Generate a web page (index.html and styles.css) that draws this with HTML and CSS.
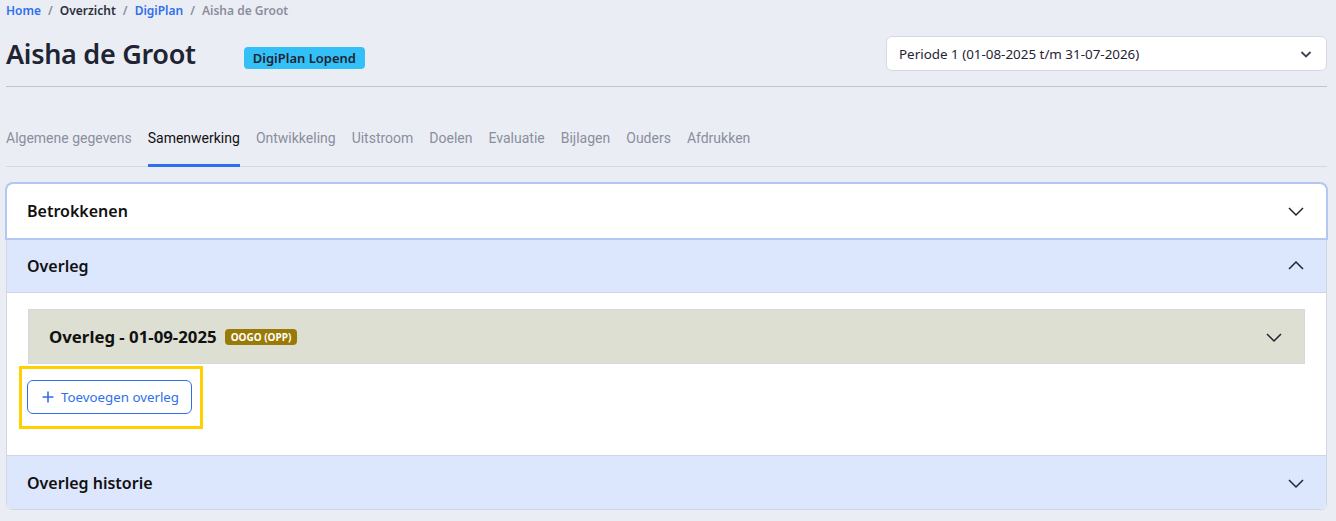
FILE: index.html
```html
<!DOCTYPE html>
<html lang="nl">
  <head>
    <meta charset="UTF-8" />
    <title>DigiPlan - Aisha de Groot</title>
    <link rel="stylesheet" href="styles.css">
  </head>
  <body>
    <nav class="breadcrumb">
      <a href="#" class="crumb-link">Home</a>
      <span class="sep">/</span>
      <span class="crumb-dark">Overzicht</span>
      <span class="sep">/</span>
      <a href="#" class="crumb-link">DigiPlan</a>
      <span class="sep">/</span>
      <span class="crumb-current">Aisha de Groot</span>
    </nav>

    <header class="page-header">
      <div class="title-group">
        <h1>Aisha de Groot</h1>
        <span class="status-badge">DigiPlan Lopend</span>
      </div>
      <div class="period-select">
        <span>Periode 1 (01-08-2025 t/m 31-07-2026)</span>
        <svg width="16" height="16" viewBox="0 0 16 16">
          <path d="M3.5 6l4.5 4.5 4.5-4.5" fill="none" stroke="#3d4352" stroke-width="1.8" />
        </svg>
      </div>
    </header>

    <ul class="tabs">
      <li>Algemene gegevens</li>
      <li class="active">Samenwerking</li>
      <li>Ontwikkeling</li>
      <li>Uitstroom</li>
      <li>Doelen</li>
      <li>Evaluatie</li>
      <li>Bijlagen</li>
      <li>Ouders</li>
      <li>Afdrukken</li>
    </ul>

    <div class="accordion">
      <div class="acc-item">
        <div class="acc-header focused">
          <span>Betrokkenen</span>
          <svg width="20" height="20" viewBox="0 0 20 20">
            <path d="M3 7l7 7 7-7" fill="none" stroke="#1f2433" stroke-width="1.5" />
          </svg>
        </div>
      </div>

      <div class="acc-item">
        <div class="acc-header open">
          <span>Overleg</span>
          <svg width="20" height="20" viewBox="0 0 20 20">
            <path d="M3 13l7-7 7 7" fill="none" stroke="#1f2433" stroke-width="1.5" />
          </svg>
        </div>
        <div class="acc-body">
          <div class="meeting">
            <div class="meeting-header">
              <span class="meeting-title">Overleg - 01-09-2025</span>
              <span class="type-badge">OOGO (OPP)</span>
              <svg class="chevron" width="20" height="20" viewBox="0 0 20 20">
                <path d="M3 7l7 7 7-7" fill="none" stroke="#1f2433" stroke-width="1.5" />
              </svg>
            </div>
          </div>
          <div class="highlight">
            <button type="button" class="add-btn">
              <svg width="14" height="14" viewBox="0 0 14 14">
                <path d="M7 1.5v11M1.5 7h11" fill="none" stroke="#2f6fed" stroke-width="1.6" />
              </svg>
              Toevoegen overleg
            </button>
          </div>
        </div>
      </div>

      <div class="acc-item">
        <div class="acc-header closed">
          <span>Overleg historie</span>
          <svg width="20" height="20" viewBox="0 0 20 20">
            <path d="M3 7l7 7 7-7" fill="none" stroke="#1f2433" stroke-width="1.5" />
          </svg>
        </div>
      </div>
    </div>
  </body>
</html>
```

FILE: styles.css
```css
* {
  margin: 0;
  padding: 0;
  box-sizing: border-box;
}

body {
  font-family: "Noto Sans", Arial, sans-serif;
  background-color: #ebedf5;
  color: #1f2433;
  padding: 0 9px 0 6px;
}

.breadcrumb {
  display: flex;
  gap: 7px;
  font-size: 12px;
  font-weight: 600;
  line-height: 18px;
  padding-top: 2px;
}

.crumb-link {
  color: #2f6fed;
  text-decoration: none;
}

.crumb-dark {
  color: #2a2f3c;
}

.sep,
.crumb-current {
  color: #8a8f9c;
}

.page-header {
  display: flex;
  justify-content: space-between;
  align-items: center;
  padding: 15px 0 14px;
  border-bottom: 1px solid #c0c4cf;
}

.title-group {
  display: flex;
  align-items: center;
  gap: 48px;
}

h1 {
  font-size: 27px;
  font-weight: 600;
  letter-spacing: -0.3px;
  color: #1f2433;
}

.status-badge {
  background-color: #33c0f7;
  color: #1f2433;
  font-size: 13px;
  font-weight: 600;
  padding: 2px 9px;
  border-radius: 4px;
  margin-top: 8px;
}

.period-select {
  width: 441px;
  height: 35px;
  background-color: #fff;
  border: 1px solid #d5d9e6;
  border-radius: 6px;
  display: flex;
  justify-content: space-between;
  align-items: center;
  padding: 0 12px 0 12px;
  font-size: 13.4px;
  color: #1f2433;
}

.tabs {
  list-style: none;
  display: flex;
  gap: 16px;
  margin-top: 38px;
  border-bottom: 1px solid #d5d8e2;
  font-family: Roboto, Arial, sans-serif;
  font-size: 14px;
  color: #8a8f9c;
}

.tabs li {
  padding: 5px 0 18px;
  border-bottom: 3px solid transparent;
  margin-bottom: -1px;
}

.tabs .active {
  color: #111;
  border-bottom-color: #2f6fed;
}

.accordion {
  margin-top: 16px;
  border: 1px solid #d0d6e4;
  border-radius: 6px;
  background-color: #fff;
}

.acc-header {
  height: 54px;
  display: flex;
  justify-content: space-between;
  align-items: center;
  padding: 0 20px 0 20px;
  font-size: 16px;
  font-weight: 600;
  color: #111;
}

.acc-header.focused {
  border-radius: 6px 6px 0 0;
  box-shadow: 0 0 0 2px #b2c7f3;
  position: relative;
}

.acc-header.open {
  height: 54px;
  margin-top: 1px;
  background-color: #dce6fc;
  border-top: 1px solid #b2c7f3;
  border-bottom: 1px solid #cdd4e3;
}

.acc-header.closed {
  background-color: #dce6fc;
  border-top: 1px solid #cdd4e3;
  border-radius: 0 0 6px 6px;
  height: 54px;
}

.acc-body {
  padding: 16px 21px 26px 21px;
}

.meeting {
  border: 1px solid #d3d8e3;
}

.meeting-header {
  height: 53px;
  background-color: #dedfd3;
  display: flex;
  align-items: center;
  gap: 8px;
  padding: 0 20px;
}

.meeting-title {
  font-size: 16.8px;
  font-weight: 700;
  color: #111;
}

.type-badge {
  background-color: #9a7a07;
  color: #fff;
  font-size: 10px;
  font-weight: 700;
  padding: 1px 6px;
  border-radius: 4px;
}

.chevron {
  margin-left: auto;
}

.highlight {
  display: inline-block;
  border: 3px solid #ffd000;
  padding: 11px 8px 12px 5px;
  margin: 2px 0 0 -9px;
}

.add-btn {
  display: flex;
  align-items: center;
  gap: 6px;
  height: 34px;
  padding: 0 12px 0 13px;
  background-color: #fff;
  border: 1px solid #2f6fed;
  border-radius: 6px;
  color: #2f6fed;
  font-family: "Noto Sans", Arial, sans-serif;
  font-size: 13.3px;
}
```
